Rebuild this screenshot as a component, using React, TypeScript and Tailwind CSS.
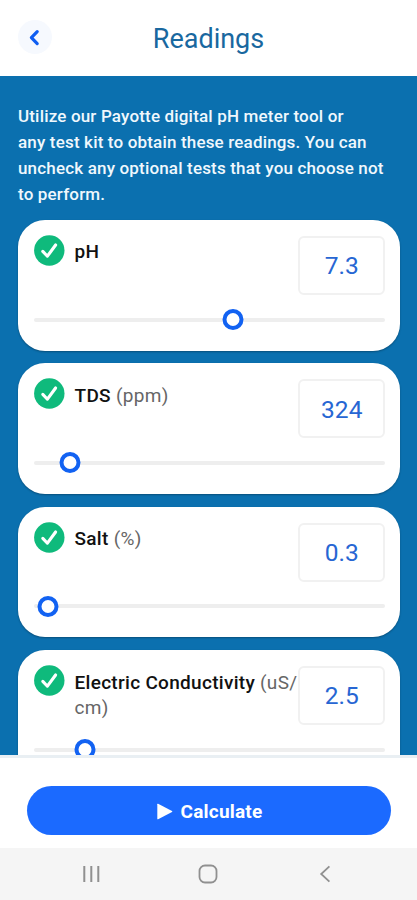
import React, { useState } from 'react';

type Reading = {
  id: string;
  name: string;
  unit?: string;
  value: string;
  position: number; // thumb center along the track, in percent
};

const READINGS: Reading[] = [
  { id: 'ph', name: 'pH', value: '7.3', position: 56.9 },
  { id: 'tds', name: 'TDS', unit: '(ppm)', value: '324', position: 10.5 },
  { id: 'salt', name: 'Salt', unit: '(%)', value: '0.3', position: 4 },
  { id: 'ec', name: 'Electric Conductivity', unit: '(uS/\u200bcm)', value: '2.5', position: 14.6 },
];

function Header() {
  return (
    <header className="relative flex h-[76px] shrink-0 items-center justify-center bg-white">
      <button
        aria-label="Back"
        className="absolute left-[18px] top-5 flex h-[34px] w-[34px] items-center justify-center rounded-full bg-[#f6f9fe]"
      >
        <svg width="12" height="18" viewBox="0 0 12 18" fill="none" className="-ml-0.5">
          <path d="M9.2 3.6 3.4 9.6l5.8 6" stroke="#0f5ef2" strokeWidth="3.2" strokeLinecap="round" strokeLinejoin="round" />
        </svg>
      </button>
      <h1 className="pt-0.5 text-[27px] leading-8 text-[#19689f]">Readings</h1>
    </header>
  );
}

function CheckCircle({ checked }: { checked: boolean }) {
  return (
    <svg width="31" height="31" viewBox="0 0 31 31" fill="none">
      <circle cx="15.3" cy="15.5" r="15.2" fill={checked ? '#0fba7c' : '#d4d4d4'} />
      <path d="M8.8 16.4 13.4 21.2 21.6 10" stroke="#fff" strokeWidth="3.1" strokeLinecap="round" strokeLinejoin="round" />
    </svg>
  );
}

function ReadingCard({ reading }: { reading: Reading }) {
  const [checked, setChecked] = useState(true);

  return (
    <div className="h-[130.5px] shrink-0 rounded-[27px] bg-white pl-[15.5px] pr-[15px] pt-4 shadow-[0_1px_2px_rgba(0,0,0,0.3)]">
      <div className="flex h-[59px] items-start">
        <button aria-label={`Toggle ${reading.name}`} onClick={() => setChecked(!checked)} className="-mt-px shrink-0">
          <CheckCircle checked={checked} />
        </button>
        <p className="-mr-1 ml-[10px] mt-[3.4px] min-w-0 flex-1 text-[19px] font-medium leading-[25px] tracking-[0.3px] text-[#111]">
          {reading.name} {reading.unit && <span className="font-normal text-[#666]">{reading.unit}</span>}
        </p>
        <div className="flex h-[59px] w-[86.5px] shrink-0 items-center justify-center rounded-md border-2 border-[#f1f1f1] pl-px pt-0.5 text-[24.5px] text-[#2766d3]">
          {reading.value}
        </div>
      </div>

      <div className="relative mt-[22.5px] h-1 rounded-full bg-[#eeeeee]">
        <div
          className="absolute -top-[8.5px] h-[21px] w-[21px] -translate-x-1/2 rounded-full border-4 border-[#1262f2] bg-white"
          style={{ left: `${reading.position}%` }}
        />
      </div>
    </div>
  );
}

function SystemNav() {
  return (
    <nav className="flex h-[52px] items-center justify-around bg-[#f5f5f5] px-[33px] text-[#909090]">
      <svg width="18" height="18" viewBox="0 0 18 18" stroke="currentColor" strokeWidth="2">
        <path d="M2.3 1v16M9.3 1v16M16.3 1v16" />
      </svg>
      <svg width="20" height="20" viewBox="0 0 20 20" fill="none" stroke="currentColor" strokeWidth="1.8">
        <rect x="1.5" y="1.5" width="17" height="17" rx="5.5" />
      </svg>
      <svg width="18" height="18" viewBox="0 0 18 18" fill="none" stroke="currentColor" strokeWidth="1.8">
        <path d="M12.4 1.4 4.2 9l8.2 7.6" />
      </svg>
    </nav>
  );
}

export default function App() {
  return (
    <div className="flex h-[900px] w-[417px] flex-col overflow-hidden bg-white font-[Roboto,sans-serif]">
      <Header />

      <main className="flex h-[679px] flex-col overflow-hidden bg-[#0b70af] pl-[18px] pr-[17.5px] pt-[27px]">
        <p className="whitespace-nowrap text-[17px] font-medium leading-[26px] tracking-[0.17px] text-[#f0f8fd]">
          Utilize our Payotte digital pH meter tool or
          <br />
          any test kit to obtain these readings. You can
          <br />
          uncheck any optional tests that you choose not
          <br />
          to perform.
        </p>
        <div className="mt-[13px] flex flex-col gap-[12.9px]">
          {READINGS.map((reading) => (
            <ReadingCard key={reading.id} reading={reading} />
          ))}
        </div>
      </main>

      <footer className="relative flex h-[93px] shrink-0 flex-col border-t-[3px] border-[#e9eff3] bg-white px-[26.5px] pt-7">
        <button className="flex h-[49px] items-center justify-center gap-2 rounded-full bg-[#1b6aff] pl-0.5 pt-[3px] text-[19px] font-bold tracking-[0.2px] text-white">
          <svg width="16" height="17" viewBox="0 0 16 17" fill="currentColor" className="-mt-px">
            <path d="M.3 1.2v14.6q0 .8.8.4L15 9q.8-.5 0-1L1.1.8Q.3.4.3 1.2Z" />
          </svg>
          Calculate
        </button>
      </footer>
      <SystemNav />
    </div>
  );
}
